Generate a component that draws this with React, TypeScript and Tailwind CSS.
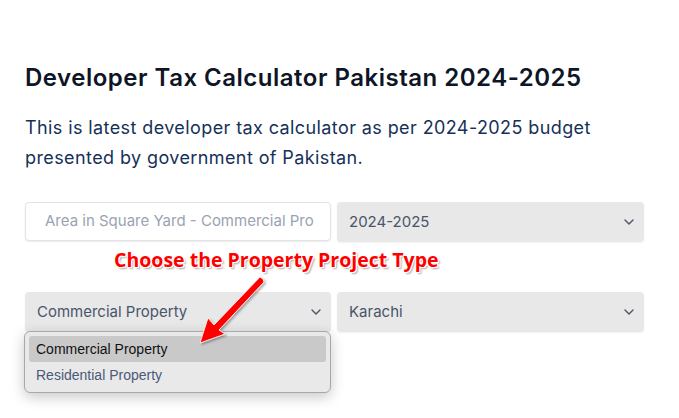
import React from "react";

const Chevron = () => (
  <svg width="10" height="6" viewBox="0 0 10 6" fill="none" className="shrink-0">
    <path d="M1 1l4 4 4-4" stroke="#4b5563" strokeWidth="1.4" strokeLinecap="round" strokeLinejoin="round" />
  </svg>
);

export default function App() {
  return (
    <div className="relative w-[679px] h-[418px] overflow-hidden bg-white font-['Inter',sans-serif]">
      <div className="w-[619px] pl-[25px] pt-[61px] box-content">
        <h1 className="text-[24px] leading-[34px] font-semibold text-[#0d1526] tracking-[0.5px]">
          Developer Tax Calculator Pakistan 2024-2025
        </h1>
        <p className="mt-[18px] text-[18px] leading-[30px] text-[#163158] tracking-[0.4px] w-[610px]">
          This is latest developer tax calculator as per 2024-2025 budget presented by government of Pakistan.
        </p>
        <div className="mt-[29px] grid grid-cols-[306px_307px] gap-x-[6px] gap-y-[50px]">
          <div className="h-[39px] rounded-[4px] border border-[#e3e3e3] bg-white shadow-[0_1px_2px_rgba(0,0,0,0.08)] flex items-center pl-[19px] text-[15px] text-[#9aa3b2] whitespace-nowrap overflow-hidden">
            Area in Square Yard - Commercial Pro
          </div>
          <div className="h-[40px] rounded-[4px] bg-[#e8e8e8] shadow-[0_1px_2px_rgba(0,0,0,0.06)] flex items-center justify-between pl-[12px] pr-[10px] text-[15px] text-[#4a5568]">
            <span>2024-2025</span>
            <Chevron />
          </div>
          <div className="h-[40px] rounded-[4px] bg-[#e8e8e8] shadow-[0_1px_2px_rgba(0,0,0,0.06)] flex items-center justify-between pl-[12px] pr-[10px] text-[15px] text-[#4a5568]">
            <span>Commercial Property</span>
            <Chevron />
          </div>
          <div className="h-[40px] rounded-[4px] bg-[#e8e8e8] shadow-[0_1px_2px_rgba(0,0,0,0.06)] flex items-center justify-between pl-[12px] pr-[10px] text-[15px] text-[#4a5568]">
            <span>Karachi</span>
            <Chevron />
          </div>
        </div>
      </div>

      {/* annotation label */}
      <div className="absolute left-[114px] top-[246px] text-[19.5px] leading-[28px] font-bold text-[#ff0000] font-['Open_Sans',sans-serif] whitespace-nowrap [text-shadow:0_0_1px_#fff,1px_1px_0_#fff,-1px_-1px_0_#fff,1px_-1px_0_#fff,-1px_1px_0_#fff,2px_2px_2px_rgba(0,0,0,0.35)]">
        Choose the Property Project Type
      </div>

      {/* dropdown menu */}
      <div className="absolute left-[24px] top-[331px] w-[307px] h-[62px] rounded-[6px] border border-[#a8a8a8] bg-[#e9e9e9] shadow-[0_4px_14px_rgba(0,0,0,0.22)] p-[4px] font-['Liberation_Sans',Arial,sans-serif] text-[14px]">
        <div className="h-[26px] rounded-[3px] bg-[#c9c9c9] flex items-center pl-[7px] text-[#111]">Commercial Property</div>
        <div className="h-[27px] flex items-center pl-[7px] text-[#4a5a78]">Residential Property</div>
      </div>

      {/* arrow */}
      <svg className="absolute left-0 top-0 pointer-events-none" width="679" height="418" viewBox="0 0 679 418">
        <defs>
          <filter id="sh" x="-20%" y="-20%" width="140%" height="140%">
            <feDropShadow dx="1.5" dy="1.5" stdDeviation="1.2" floodColor="#000" floodOpacity="0.35" />
          </filter>
        </defs>
        <path
          d="M263 279 L264 282 L219 330 L225 334 L200 343 L208 318 L214 325 L260 277 Z"
          fill="#f00"
          stroke="#fff"
          strokeWidth="0.8"
          filter="url(#sh)"
        />
      </svg>
    </div>
  );
}
